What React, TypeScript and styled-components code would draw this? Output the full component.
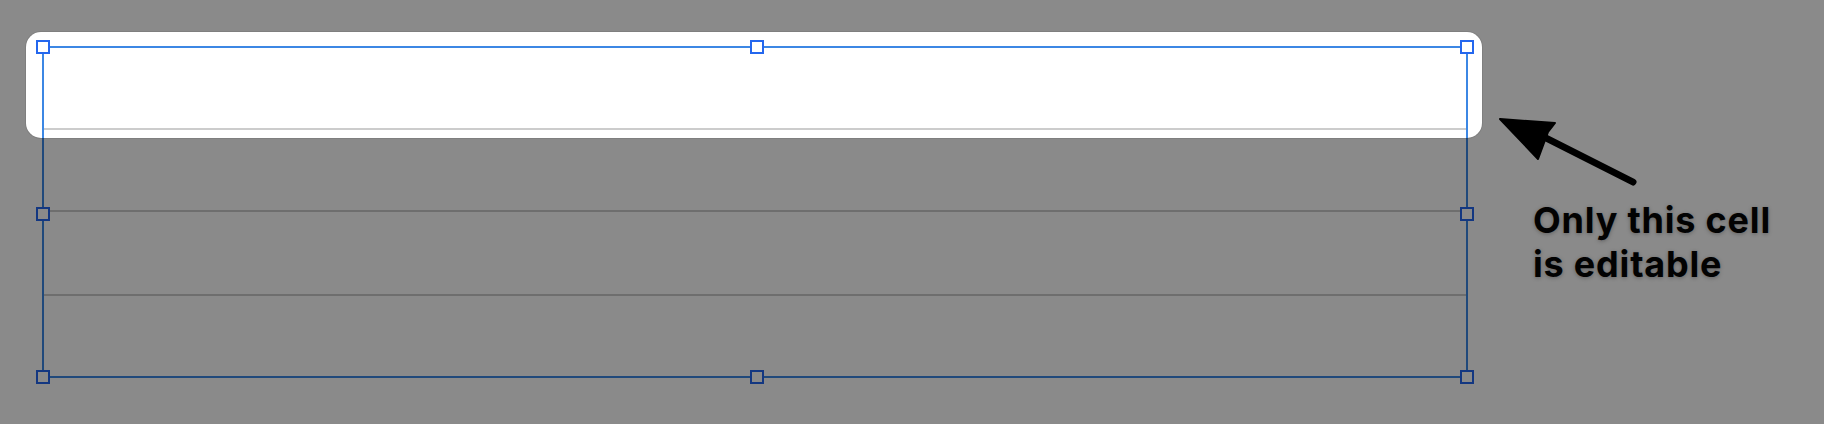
import React from "react";
import styled, { createGlobalStyle, css } from "styled-components";

const GlobalStyle = createGlobalStyle`
  html, body {
    margin: 0;
    padding: 0;
    background: #ffffff;
    overflow: hidden;
  }
  body {
    font-family: Inter, "Noto Sans", "Liberation Sans", sans-serif;
  }
`;

const Stage = styled.div`
  display: flex;
  align-items: flex-start;
  width: 1824px;
  height: 424px;
  padding: 46px 0 0 42px;
  box-sizing: border-box;
  background: #ffffff;
`;

const Frame = styled.div`
  position: relative;
  width: 1426px;
  height: 332px;
  box-sizing: border-box;
  border: 2px solid #3c87e4;
  display: flex;
  flex-direction: column;
`;

const Row = styled.div<{ $h: number; $last?: boolean; $spot?: boolean }>`
  height: ${(p) => p.$h}px;
  flex: none;
  box-sizing: border-box;
  border-bottom: ${(p) => (p.$last ? "none" : "2px solid #cccccc")};
  ${(p) =>
    p.$spot &&
    css`
      position: relative;
      &::before {
        content: "";
        position: absolute;
        left: -18px;
        right: -16px;
        top: -16px;
        bottom: -10px;
        border-radius: 15px;
        box-shadow: 0 0 0 1px rgba(0, 0, 0, 0.08),
          0 0 0 4000px rgba(0, 0, 0, 0.46);
        pointer-events: none;
        z-index: 10;
      }
    `}
`;

const posX = { start: "-1px", mid: "calc(50% + 2px)", end: "calc(100% + 1px)" };
const posY = { start: "-1px", mid: "calc(50% + 2px)", end: "calc(100% + 1px)" };

const Handle = styled.span<{ $x: keyof typeof posX; $y: keyof typeof posY }>`
  position: absolute;
  left: ${(p) => posX[p.$x]};
  top: ${(p) => posY[p.$y]};
  width: 14px;
  height: 14px;
  box-sizing: border-box;
  border: 2px solid #2467ee;
  background: #ffffff;
  transform: translate(-50%, -50%);
  z-index: 5;
`;

const Callout = styled.div`
  display: flex;
  flex-direction: column;
  margin: 66px 0 0 28px;
`;

const ArrowIcon = styled.svg`
  display: block;
  width: 144px;
  height: 78px;
`;

const Note = styled.div`
  margin: 8px 0 0 37px;
  font-family: Inter, "Noto Sans", "Liberation Sans", sans-serif;
  font-weight: 700;
  font-size: 36px;
  line-height: 44px;
  color: #050505;
  letter-spacing: 0.8px;
  text-shadow: 0 1px 4px rgba(0, 0, 0, 0.3);
  white-space: nowrap;
`;

const handles: Array<[keyof typeof posX, keyof typeof posY]> = [
  ["start", "start"],
  ["mid", "start"],
  ["end", "start"],
  ["start", "mid"],
  ["end", "mid"],
  ["start", "end"],
  ["mid", "end"],
  ["end", "end"],
];

export default function App() {
  return (
    <>
      <GlobalStyle />
      <Stage>
        <Frame>
          <Row $h={82} $spot />
          <Row $h={82} />
          <Row $h={84} />
          <Row $h={80} $last />
          {handles.map(([x, y]) => (
            <Handle key={`${x}-${y}`} $x={x} $y={y} />
          ))}
        </Frame>
        <Callout>
          <ArrowIcon viewBox="0 0 144 78">
            <line
              x1="48"
              y1="25"
              x2="137"
              y2="70"
              stroke="#000"
              strokeWidth="7"
              strokeLinecap="round"
            />
            <path
              d="M4 7 L59 11 L52 20 L42 47 Z"
              fill="#000"
              stroke="#000"
              strokeWidth="2"
              strokeLinejoin="round"
            />
          </ArrowIcon>
          <Note>
            Only this cell
            <br />
            is editable
          </Note>
        </Callout>
      </Stage>
    </>
  );
}
